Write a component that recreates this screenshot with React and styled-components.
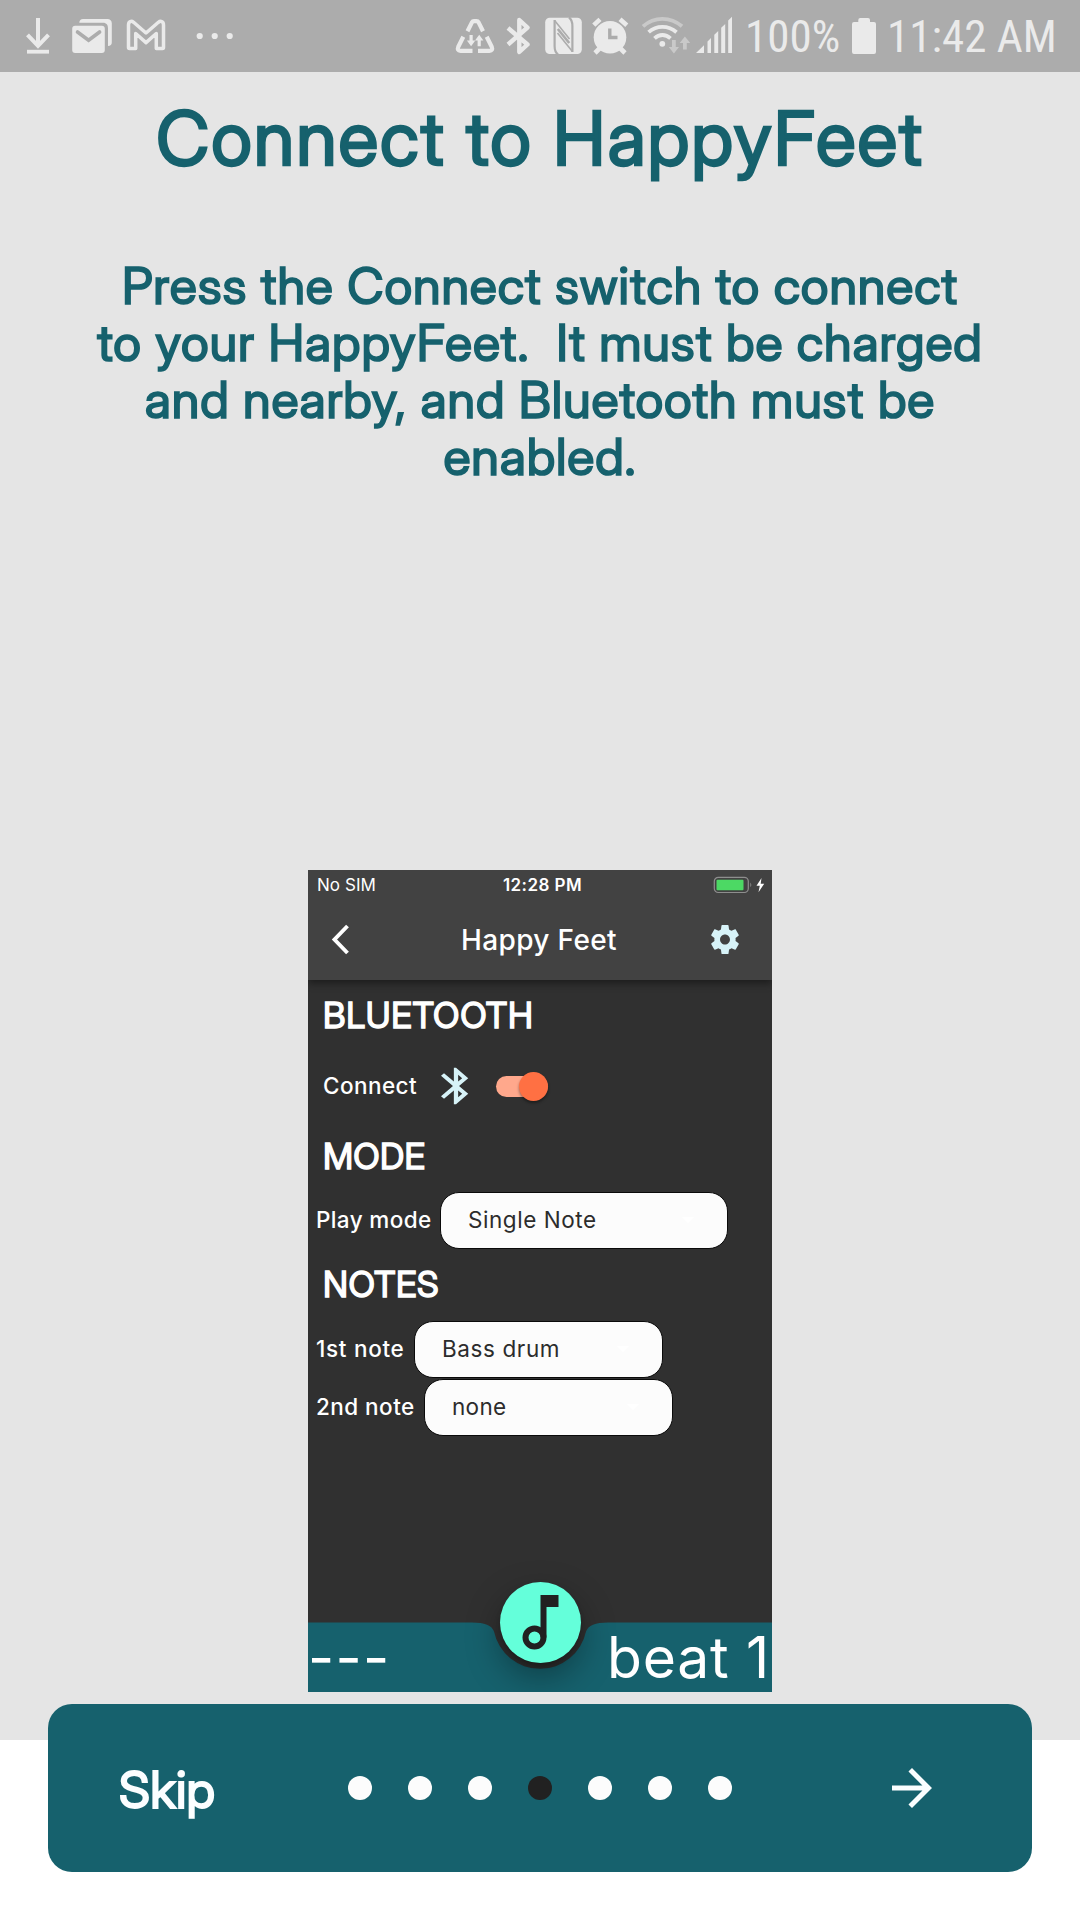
import React from 'react';
import styled, { createGlobalStyle } from 'styled-components';

const TEAL = '#16616d';
const STATUS = '#acacac';
const INK = '#eaeaea';
const FADED = '#c9c9c9';
const ICE = '#d7f3f8';
const DISPLAY = '"Inter Display", Inter, sans-serif';

const GlobalStyle = createGlobalStyle`
  *, *::before, *::after { box-sizing: border-box; }
  body { margin: 0; background: #fff; }
  svg { display: block; flex: none; }
`;

const Screen = styled.div`
  display: flex;
  flex-direction: column;
  width: 1080px;
  height: 1920px;
  overflow: hidden;
  background: #fff;
  font-family: Inter, "Liberation Sans", sans-serif;
`;

/* ---------- status bar ---------- */

const StatusBar = styled.header`
  display: flex;
  justify-content: space-between;
  height: 72px;
  background: ${STATUS};
`;

const StatusGroup = styled.div`
  display: flex;
  align-items: center;
`;

const StatusText = styled.span`
  font-family: "Roboto Condensed", Roboto, sans-serif;
  font-size: 45px;
  line-height: 72px;
  color: ${INK};
  white-space: nowrap;
  width: ${(p) => p.$width}px;
  padding: 2px 0 0;
`;

/* Each glyph keeps the bar's own x coordinates in its viewBox. */
const Glyph = ({ from, to, children }) => (
  <svg width={to - from} height="72" viewBox={`${from} 0 ${to - from} 72`} fill="none">
    {children}
  </svg>
);

const DownloadGlyph = () => (
  <Glyph from={0} to={62}>
    <path d="M38 18V46M27.5 34.8L38 45.8L48.5 34.8" stroke={INK} strokeWidth="4" />
    <path d="M27 51.7H49" stroke={INK} strokeWidth="3.8" />
  </Glyph>
);

const MailGlyph = () => (
  <Glyph from={62} to={120}>
    <rect x="72.2" y="25.8" width="32.6" height="27.2" rx="3" fill={INK} />
    <path d="M77.5 32L88.6 40.3L99.6 32" stroke={STATUS} strokeWidth="3.6" strokeLinecap="round" />
    <path d="M79.3 22.8C79.3 20.5 80.8 19 83 19H107.5C110 19 111.8 20.8 111.8 23.3V42.5C111.8 44.8 110.5 46 108 46V28.5C108 25 106.5 22.8 103 22.8Z" fill={INK} />
  </Glyph>
);

const GmailGlyph = () => (
  <Glyph from={120} to={180}>
    <path
      d="M129.5 48.5Q128.5 48.5 128.5 47.5V25C128.5 21.3 131.4 20.5 133.6 22.3L146 33L158.4 22.3C160.6 20.5 163.5 21.3 163.5 25V47.5Q163.5 48.5 162.5 48.5H156.3V33.5L146 42.6L135.7 33.5V48.5Z"
      stroke={INK}
      strokeWidth="3.5"
      strokeLinejoin="round"
    />
  </Glyph>
);

const MoreGlyph = () => (
  <Glyph from={180} to={250}>
    {[199.7, 214.7, 229.7].map((x) => (
      <circle key={x} cx={x} cy="36" r="3.1" fill={INK} />
    ))}
  </Glyph>
);

const DataSaverGlyph = () => (
  <Glyph from={450} to={500}>
    <g stroke={INK} strokeWidth="4.2" strokeLinejoin="round">
      <path d="M467.5 31.3L471.8 22.6Q472.6 21.2 474 21.2H476.5Q477.9 21.2 478.7 22.6L483 31.3" />
      <path d="M463.3 36.8L458.3 46.8Q456.8 50.8 460.5 50.8H472.5" />
      <path d="M486.7 36.8L491.7 46.8Q493.2 50.8 489.5 50.8H478" />
    </g>
    <path d="M469.5 35H472.7V40.5H475.3L471.1 46.3L466.9 40.5H469.5Z" fill={INK} />
    <path d="M477.6 46.3H480.8V40.5H483.4L479.2 34.7L475 40.5H477.6Z" fill={INK} />
  </Glyph>
);

const BluetoothGlyph = () => (
  <Glyph from={500} to={538}>
    <path d="M508 28L527.5 44.5L519.3 52V20L527.5 27.5L508 44.5" stroke={INK} strokeWidth="4.4" strokeLinejoin="round" />
  </Glyph>
);

const NfcGlyph = () => (
  <Glyph from={538} to={588}>
    <rect x="545.2" y="17.8" width="36.6" height="36.2" rx="4.5" fill={INK} />
    <g stroke={STATUS} strokeLinejoin="bevel">
      <path d="M558 54.5Q554.600 52 554.600 46V20" strokeWidth="2.2" />
      <path d="M569 17.5Q572.400 20 572.400 26V52" strokeWidth="2.2" />
      <path d="M554.600 20.500L569.500 39" strokeWidth="1.600" />
      <path d="M557.500 33L572.400 51.500" strokeWidth="1.600" />
      <path d="M557.800 29L569.200 43" strokeWidth="2.600" />
    </g>
  </Glyph>
);

const AlarmGlyph = () => (
  <Glyph from={588} to={636}>
    <circle cx="610" cy="37.3" r="16.3" fill={INK} />
    <path d="M593.8 25.2L600 19.3M620 19.3L626.8 25.2M600 48L595 53M620 48L625 53" stroke={INK} strokeWidth="4.6" />
    <path d="M609.8 28.5V37.5H617.5" stroke={STATUS} strokeWidth="3.4" />
  </Glyph>
);

const WifiGlyph = () => (
  <Glyph from={636} to={692}>
    <path d="M643 26.3Q651.5 18.8 662.4 18.8T682 26.3" stroke={FADED} strokeWidth="3.8" />
    <path d="M648.6 32.2Q654.5 26.8 662.4 26.8T676.5 32.2" stroke={INK} strokeWidth="3.8" />
    <path d="M654.5 38.3Q658 35 662.4 35T670.5 38.3" stroke={INK} strokeWidth="3.8" />
    <circle cx="662.3" cy="43.8" r="2.9" fill={INK} />
    <path d="M672 40H675.8V47H679L673.9 53.5L668.8 47H672Z" fill={FADED} />
    <path d="M683 49.5H686.8V43H690.2L684.9 36.5L679.7 43H683Z" fill={FADED} />
  </Glyph>
);

const SignalGlyph = () => (
  <Glyph from={692} to={745}>
    <path
      d="M696 53L704 45.2V53ZM707.5 53V41.5L711 38V53ZM714.3 53V34.8L718.2 31V53ZM721.2 53V27.8L725.2 24V53ZM728.2 53V20.5L732 16.8V53Z"
      fill={INK}
    />
  </Glyph>
);

const BatteryGlyph = () => (
  <Glyph from={845} to={887}>
    <path d="M854 22H858.3V20Q858.3 18 860.3 18H868Q870 18 870 20V22H874Q876 22 876 24V52Q876 54 874 54H854Q852 54 852 52V24Q852 22 854 22Z" fill={INK} />
  </Glyph>
);

/* ---------- onboarding page ---------- */

const Page = styled.main`
  display: flex;
  flex-direction: column;
  align-items: center;
  flex: none;
  height: 1668px;
  padding-top: 20px;
  background: #e5e5e5;
  color: ${TEAL};
`;

const Title = styled.h1`
  margin: 0;
  font-family: ${DISPLAY};
  font-size: 74px;
  line-height: 92px;
  font-weight: 400;
  letter-spacing: 1.9px;
  -webkit-text-stroke: 2.3px ${TEAL};
  white-space: nowrap;
`;

const Message = styled.p`
  margin: 73px 0 0;
  font-family: ${DISPLAY};
  font-size: 50.4px;
  line-height: 57px;
  font-weight: 400;
  letter-spacing: 0.88px;
  -webkit-text-stroke: 1.7px ${TEAL};
  text-align: center;
  white-space: pre;
`;

/* ---------- phone preview ---------- */

const Phone = styled.section`
  display: flex;
  flex-direction: column;
  width: 464px;
  height: 822px;
  margin-top: 385px;
  overflow: hidden;
  background: #303030;
  color: #fff;
`;

const PhoneHeader = styled.div`
  position: relative;
  flex: none;
  height: 110px;
  background: #424242;
  box-shadow: 0 3px 8px rgba(0, 0, 0, 0.45);
`;

const PhoneStatus = styled.div`
  display: grid;
  grid-template-columns: 1fr auto 1fr;
  align-items: center;
  height: 30px;
  padding: 0 7px 0 9px;
  font-size: 17px;
  line-height: 30px;
`;

const Carrier = styled.span`
  letter-spacing: 0.05px;
`;

const Clock = styled.span`
  padding-left: 3px;
  font-weight: 600;
  letter-spacing: 0.44px;
`;

const Charge = styled.span`
  display: flex;
  justify-content: flex-end;
`;

const AppBar = styled.div`
  display: grid;
  grid-template-columns: 1fr auto 1fr;
  align-items: center;
  height: 78px;
  padding: 0 30px 0 22px;
`;

const AppTitle = styled.h2`
  margin: 0;
  padding: 2px 0 0 6px;
  font-size: 28px;
  line-height: 40px;
  font-weight: 500;
  letter-spacing: 0.35px;
`;

const GearIcon = styled.svg`
  justify-self: end;
`;

const Settings = styled.div`
  display: flex;
  flex-direction: column;
  flex: 1;
  padding: 13px 8px 0;
`;

const Heading = styled.h3`
  margin: ${(p) => p.$top || 0}px 0 0 7px;
  font-family: ${DISPLAY};
  font-size: 35.2px;
  line-height: 44px;
  font-weight: 400;
  letter-spacing: ${(p) => p.$tracking}px;
  -webkit-text-stroke: 1.3px #fff;
`;

const Row = styled.div`
  display: flex;
  align-items: center;
  height: ${(p) => p.$height || 57}px;
  margin-top: ${(p) => p.$top}px;
`;

const Label = styled.span`
  width: ${(p) => p.$width}px;
  margin-left: ${(p) => p.$indent || 0}px;
  padding-bottom: ${(p) => p.$lift || 0}px;
  font-size: 22.5px;
  line-height: 30px;
  font-weight: 500;
  letter-spacing: ${(p) => p.$tracking}px;
  white-space: nowrap;
`;

const Select = styled.div`
  display: flex;
  align-items: center;
  justify-content: space-between;
  width: ${(p) => p.$width}px;
  height: 57px;
  padding: 0 33px 2px 27px;
  border: 1px solid #0a0a0a;
  border-radius: 19px;
  background: #fcfcfc;
  color: #2c2c2c;
  font-size: 22.5px;
  letter-spacing: ${(p) => p.$tracking}px;
`;

const Caret = () => (
  <svg width="12" height="6" viewBox="0 0 12 6">
    <path d="M0 0H12L6 6Z" fill="#fff" />
  </svg>
);

const BluetoothMark = styled.svg`
  margin-left: 21px;
`;

const Track = styled.div`
  display: flex;
  align-items: center;
  justify-content: flex-end;
  width: 52px;
  height: 21px;
  margin-left: 24.5px;
  border-radius: 11px;
  background: #ffa88c;
`;

const Thumb = styled.div`
  flex: none;
  width: 29px;
  height: 29px;
  border-radius: 50%;
  background: #ff7043;
  box-shadow: 0 2px 3px rgba(0, 0, 0, 0.4);
`;

const BeatBar = styled.div`
  position: relative;
  display: flex;
  align-items: center;
  justify-content: space-between;
  flex: none;
  height: 70px;
  padding: 2px 2px 0 0;
  font-size: 57px;
  line-height: 68px;
`;

const BeatShape = styled.svg`
  position: absolute;
  inset: 0;
`;

const Beat = styled.span`
  position: relative;
  letter-spacing: ${(p) => p.$tracking}px;
  white-space: nowrap;
`;

const NoteButton = styled.div`
  position: absolute;
  left: 191.5px;
  top: -40px;
  width: 81px;
  height: 81px;
  border-radius: 50%;
  background: #64ffda;
  box-shadow: 0 3px 4px rgba(0, 0, 0, 0.18), 0 14px 34px rgba(0, 0, 0, 0.36);
`;

/* ---------- bottom navigation ---------- */

const NavBar = styled.nav`
  position: relative;
  display: flex;
  align-items: center;
  flex: none;
  height: 168px;
  margin: -36px 48px 0;
  border-radius: 24px;
  background: ${TEAL};
  color: #fbfeff;
`;

const Skip = styled.span`
  width: 300px;
  padding: 4px 0 0 71px;
  font-family: ${DISPLAY};
  font-size: 50.4px;
  line-height: 60px;
  font-weight: 400;
  letter-spacing: 0.2px;
  -webkit-text-stroke: 1.8px #fbfeff;
`;

const Dots = styled.div`
  display: flex;
  gap: 36px;
`;

const Dot = styled.i`
  width: 24px;
  height: 24px;
  border-radius: 50%;
  background: ${(p) => (p.$active ? '#212121' : '#fcfcfc')};
`;

const NextArrow = styled.svg`
  margin: 0 90px 0 auto;
`;

const LINES = [
  'Press the Connect switch to connect',
  'to your HappyFeet.  It must be charged',
  'and nearby, and Bluetooth must be',
  'enabled.',
];

export default function App() {
  return (
    <Screen>
      <GlobalStyle />
      <StatusBar>
        <StatusGroup>
          <DownloadGlyph />
          <MailGlyph />
          <GmailGlyph />
          <MoreGlyph />
        </StatusGroup>
        <StatusGroup>
          <DataSaverGlyph />
          <BluetoothGlyph />
          <NfcGlyph />
          <AlarmGlyph />
          <WifiGlyph />
          <SignalGlyph />
          <StatusText $width={100}>100%</StatusText>
          <BatteryGlyph />
          <StatusText $width={193}>11:42 AM</StatusText>
        </StatusGroup>
      </StatusBar>

      <Page>
        <Title>Connect to HappyFeet</Title>
        <Message>{LINES.join('\n')}</Message>

        <Phone>
          <PhoneHeader>
            <PhoneStatus>
              <Carrier>No SIM</Carrier>
              <Clock>12:28 PM</Clock>
              <Charge>
                <svg width="52" height="18" viewBox="0 0 52 18" fill="none">
                  <rect x="1.3" y="1.3" width="34" height="15.2" rx="4" stroke="#8e8e8e" strokeWidth="1.2" />
                  <rect x="3.5" y="3.7" width="27" height="10.6" rx="1" fill="#4cd964" />
                  <path d="M37.3 6.5Q39.3 8.9 37.3 11.3Z" fill="#8e8e8e" />
                  <path d="M48.500 2L43.500 9.800H46.800L45.500 16.200L51.200 7.800H47.700Z" fill="#fff" />
                </svg>
              </Charge>
            </PhoneStatus>
            <AppBar>
              <svg width="28" height="32" viewBox="0 0 28 32" fill="none">
                <path d="M17.5 3L4.5 16.500L17.500 30" stroke="#fff" strokeWidth="3.9" />
              </svg>
              <AppTitle>Happy Feet</AppTitle>
              <GearIcon width="34" height="35" viewBox="0 0 24 24" preserveAspectRatio="none" fill={ICE}>
                <path d="M19.43 12.98c.04-.32.07-.64.07-.98s-.03-.66-.07-.98l2.11-1.65c.19-.15.24-.42.12-.64l-2-3.46c-.12-.22-.39-.3-.61-.22l-2.49 1c-.52-.4-1.08-.73-1.69-.98l-.38-2.65C14.46 2.18 14.25 2 14 2h-4c-.25 0-.46.18-.49.42l-.38 2.65c-.61.25-1.17.59-1.69.98l-2.49-1c-.23-.09-.49 0-.61.22l-2 3.46c-.13.22-.07.49.12.64l2.11 1.65c-.04.32-.07.65-.07.98s.03.66.07.98l-2.11 1.65c-.19.15-.24.42-.12.64l2 3.46c.12.22.39.3.61.22l2.49-1c.52.4 1.08.73 1.69.98l.38 2.65c.03.24.24.42.49.42h4c.25 0 .46-.18.49-.42l.38-2.65c.61-.25 1.17-.59 1.69-.98l2.49 1c.23.09.49 0 .61-.22l2-3.46c.12-.22.07-.49-.12-.64l-2.11-1.65zM12 15.5c-1.93 0-3.5-1.57-3.5-3.5s1.57-3.5 3.5-3.5 3.5 1.57 3.5 3.5-1.57 3.5-3.5 3.5z" />
              </GearIcon>
            </AppBar>
          </PhoneHeader>

          <Settings>
            <Heading $tracking={0.75}>BLUETOOTH</Heading>
            <Row $top={19} $height={60}>
              <Label $width={97} $indent={7} $tracking={0.44}>Connect</Label>
              <BluetoothMark width="30" height="40" viewBox="5 1 14 22" preserveAspectRatio="none" fill={ICE}>
                <path d="M17.71 7.71L12 2h-1v7.59L6.41 5 5 6.41 10.59 12 5 17.59 6.41 19 11 14.41V22h1l5.71-5.71-4.3-4.29 4.3-4.29zM13 5.83l1.88 1.88L13 9.59V5.83zm1.88 10.46L13 18.17v-3.76l1.88 1.88z" />
              </BluetoothMark>
              <Track>
                <Thumb />
              </Track>
            </Row>

            <Heading $top={18} $tracking={0.2}>MODE</Heading>
            <Row $top={14}>
              <Label $width={124} $lift={1} $tracking={0.38}>Play mode</Label>
              <Select $width={288} $tracking={0.55}>Single Note<Caret /></Select>
            </Row>

            <Heading $top={13} $tracking={0.6}>NOTES</Heading>
            <Row $top={15}>
              <Label $width={98} $lift={2} $tracking={0.7}>1st note</Label>
              <Select $width={249} $tracking={0.6}>Bass drum<Caret /></Select>
            </Row>
            <Row $top={1}>
              <Label $width={108} $lift={2} $tracking={0.45}>2nd note</Label>
              <Select $width={249} $tracking={0.3}>none<Caret /></Select>
            </Row>
          </Settings>

          <BeatBar>
            <BeatShape width="464" height="70" viewBox="0 0 464 70">
              <path d="M0 .5H164Q183 .5 186 9.5A47 47 0 0 0 278 9.5Q281 .5 300 .5H464V70H0Z" fill={TEAL} />
            </BeatShape>
            <NoteButton>
              <svg width="81" height="81" viewBox=".5 .5 81 81" fill="none">
                <path d="M41 13.5H59V25.5H47V56H41Z" fill="#212121" />
                <circle cx="35" cy="56" r="9" stroke="#212121" strokeWidth="6" />
              </svg>
            </NoteButton>
            <Beat $tracking={1.28}>---</Beat>
            <Beat $tracking={0.72}>beat 1</Beat>
          </BeatBar>
        </Phone>
      </Page>

      <NavBar>
        <Skip>Skip</Skip>
        <Dots>
          {[0, 1, 2, 3, 4, 5, 6].map((i) => (
            <Dot key={i} $active={i === 3} />
          ))}
        </Dots>
        <NextArrow width="60" height="60" viewBox="0 0 24 24" fill="#fbfeff">
          <path d="M12 4l-1.41 1.41L16.17 11H4v2h12.17l-5.58 5.59L12 20l8-8z" />
        </NextArrow>
      </NavBar>
    </Screen>
  );
}
